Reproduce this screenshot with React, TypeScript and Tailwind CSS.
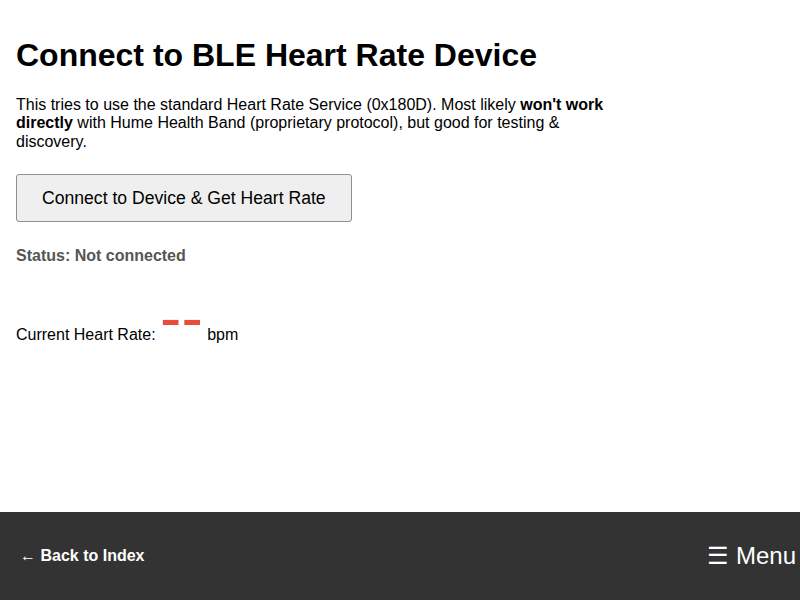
export default function App() {
  return (
    <div className="flex h-screen w-full flex-col bg-white font-['Liberation_Sans',Arial,sans-serif] text-black">
      <main className="flex-1 px-4 pt-[37px]">
        <h1 className="m-0 text-[32px] font-bold leading-[37px]">Connect to BLE Heart Rate Device</h1>
        <p className="mt-[22px] max-w-[600px] text-[16px] leading-[1.15]">
          This tries to use the standard Heart Rate Service (0x180D). Most likely <b>won't work directly</b> with
          Hume Health Band (proprietary protocol), but good for testing &amp; discovery.
        </p>
        <div className="mt-[23px]">
          <button className="h-[48px] rounded-[3px] border border-[#8f8f8f] bg-[#efefef] px-[25px] text-[17.6px] leading-[22px] text-black">
            Connect to Device &amp; Get Heart Rate
          </button>
        </div>
        <p className="mt-[25px] text-[16px] font-bold leading-[1.15] text-[#555]">Status: Not connected</p>
        <p className="mt-[16px] text-[16px] leading-[1.15]">
          Current Heart Rate: <span className="text-[64px] leading-[1.15] text-[#e74c3c]">--</span> bpm
        </p>
      </main>
      <footer className="flex h-[88px] items-center justify-between bg-[#333] pl-5 pr-1 text-white">
        <a href="#" className="text-[16px] font-bold">← Back to Index</a>
        <span className="text-[24px]">☰ Menu</span>
      </footer>
    </div>
  );
}
